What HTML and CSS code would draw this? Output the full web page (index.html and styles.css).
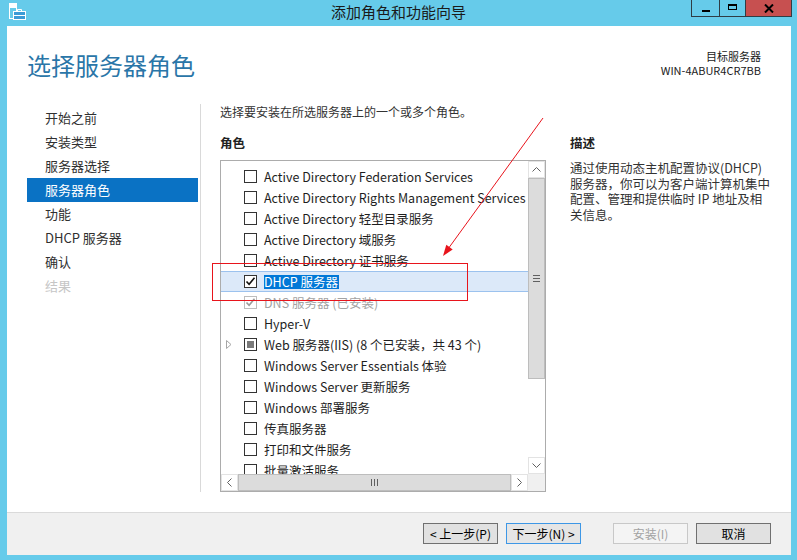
FILE: index.html
```html
<!DOCTYPE html>
<html lang="zh">
<head>
  <meta charset="UTF-8">
  <title>添加角色和功能向导</title>
  <link rel="stylesheet" href="styles.css">
</head>
<body>

  <div class="window">
    <div class="titlebar">
      <svg class="app-icon" width="17" height="17" viewBox="0 0 17 17">
        <rect x="0.5" y="0.5" width="7" height="15" fill="none" stroke="#fff"/>
        <rect x="1" y="1" width="6" height="4" fill="#fff"/>
        <rect x="4.5" y="8.5" width="12" height="8" fill="#3b9bd6" stroke="#fff"/>
        <path d="M8.5 8.5v-2h4v2" stroke="#fff" fill="none"/>
        <path d="M4.5 12.5h12" stroke="#fff"/>
      </svg>
      <div class="title">添加角色和功能向导</div>
      <div class="controls">
        <div class="ctl min"><span class="min-bar"></span></div>
        <div class="ctl max"><span class="max-box"></span></div>
        <div class="ctl close">
          <svg width="10" height="9" viewBox="0 0 10 9"><path d="M1 0.5l8 8M9 0.5l-8 8" stroke="#000" stroke-width="2"/></svg>
        </div>
      </div>
    </div>

    <div class="client">
      <div class="page-head">
        <h1>选择服务器角色</h1>
        <div class="target">
          <div>目标服务器</div>
          <div>WIN-4ABUR4CR7BB</div>
        </div>
      </div>

      <div class="main">
        <ul class="nav">
          <li>开始之前</li>
          <li>安装类型</li>
          <li>服务器选择</li>
          <li class="active">服务器角色</li>
          <li>功能</li>
          <li>DHCP 服务器</li>
          <li>确认</li>
          <li class="disabled">结果</li>
        </ul>

        <div class="content">
          <p class="intro">选择要安装在所选服务器上的一个或多个角色。</p>
          <div class="columns">
            <div class="roles">
              <div class="col-title">角色</div>
              <div class="listbox">
                <div class="list-area">
                  <div class="rows">
                    <div class="row"><span class="exp"></span><span class="cb"></span>Active Directory Federation Services</div>
                    <div class="row"><span class="exp"></span><span class="cb"></span>Active Directory Rights Management Services</div>
                    <div class="row"><span class="exp"></span><span class="cb"></span>Active Directory 轻型目录服务</div>
                    <div class="row"><span class="exp"></span><span class="cb"></span>Active Directory 域服务</div>
                    <div class="row"><span class="exp"></span><span class="cb"></span>Active Directory 证书服务</div>
                    <div class="row selected"><span class="exp"></span><span class="cb"><svg width="11" height="11" viewBox="0 0 11 11"><path d="M1.5 5.5l2.6 2.8 5.4-6.6" stroke="#111" stroke-width="1.6" fill="none"/></svg></span><span class="sel-text">DHCP 服务器</span></div>
                    <div class="row installed"><span class="exp"></span><span class="cb"><svg width="11" height="11" viewBox="0 0 11 11"><path d="M1.5 5.5l2.6 2.8 5.4-6.6" stroke="#9a9a9a" stroke-width="1.6" fill="none"/></svg></span>DNS 服务器 (已安装)</div>
                    <div class="row"><span class="exp"></span><span class="cb"></span>Hyper-V</div>
                    <div class="row"><span class="exp"><svg width="6" height="9" viewBox="0 0 6 9"><path d="M0.5 0.5l4.5 4-4.5 4z" fill="none" stroke="#a6a6a6"/></svg></span><span class="cb partial"><span class="fill"></span></span>Web 服务器(IIS) (8 个已安装，共 43 个)</div>
                    <div class="row"><span class="exp"></span><span class="cb"></span>Windows Server Essentials 体验</div>
                    <div class="row"><span class="exp"></span><span class="cb"></span>Windows Server 更新服务</div>
                    <div class="row"><span class="exp"></span><span class="cb"></span>Windows 部署服务</div>
                    <div class="row"><span class="exp"></span><span class="cb"></span>传真服务器</div>
                    <div class="row"><span class="exp"></span><span class="cb"></span>打印和文件服务</div>
                    <div class="row"><span class="exp"></span><span class="cb"></span>批量激活服务</div>
                  </div>
                  <div class="vscroll">
                    <div class="sb-btn"><svg width="9" height="5" viewBox="0 0 9 5"><path d="M0.5 4.5l4-4 4 4" stroke="#606060" fill="none"/></svg></div>
                    <div class="v-thumb"><span class="grip-h"></span></div>
                    <div class="v-track"></div>
                    <div class="sb-btn"><svg width="9" height="5" viewBox="0 0 9 5"><path d="M0.5 0.5l4 4 4-4" stroke="#606060" fill="none"/></svg></div>
                  </div>
                </div>
                <div class="hscroll-row">
                  <div class="sb-btn"><svg width="5" height="9" viewBox="0 0 5 9"><path d="M4.5 0.5l-4 4 4 4" stroke="#606060" fill="none"/></svg></div>
                  <div class="h-thumb"><span class="grip-v"></span></div>
                  <div class="sb-btn"><svg width="5" height="9" viewBox="0 0 5 9"><path d="M0.5 0.5l4 4-4 4" stroke="#606060" fill="none"/></svg></div>
                  <div class="corner"></div>
                </div>
              </div>
            </div>

            <div class="desc">
              <div class="col-title">描述</div>
              <p class="desc-text">通过使用动态主机配置协议(DHCP)<br>服务器，你可以为客户端计算机集中<br>配置、管理和提供临时 IP 地址及相<br>关信息。</p>
            </div>
          </div>
        </div>
      </div>

      <div class="footer">
        <button class="btn">&lt; 上一步(P)</button>
        <button class="btn default">下一步(N) &gt;</button>
        <button class="btn disabled">安装(I)</button>
        <button class="btn">取消</button>
      </div>
    </div>
  </div>

  <svg class="annot" width="797" height="560" viewBox="0 0 797 560">
    <rect x="212.5" y="263.5" width="255" height="37" fill="none" stroke="#e8141c"/>
    <line x1="543" y1="118" x2="448" y2="249" stroke="#e8141c"/>
    <polygon points="443,256 452.7,249.5 446.3,244.8" fill="#e8141c"/>
  </svg>

</body>
</html>
```

FILE: styles.css
```css
body {
  margin: 0;
  background: #66cbea;
  font-family: "Noto Sans CJK SC", "Noto Sans", sans-serif;
  color: #1e1e1e;
}

.window {
  width: 797px;
  height: 560px;
  display: flex;
  flex-direction: column;
}

/* title bar */
.titlebar {
  height: 26px;
  display: grid;
  grid-template-columns: 1fr auto 1fr;
  align-items: start;
}

.app-icon {
  margin: 3px 0 0 9px;
}

.title {
  font-size: 15px;
  line-height: 23px;
  color: #1a1a1a;
}

.controls {
  justify-self: end;
  display: flex;
  margin-right: 5px;
}

.ctl {
  height: 17px;
  box-sizing: border-box;
  border: 1px solid #2f3d45;
  border-top: none;
  display: flex;
  justify-content: center;
  align-items: center;
}

.ctl.min {
  width: 29px;
}

.ctl.max {
  width: 27px;
  margin-left: -1px;
}

.ctl.close {
  width: 47px;
  margin-left: -1px;
  background: #c75050;
}

.min-bar {
  width: 8px;
  height: 2px;
  background: #000;
  margin-top: 6px;
}

.max-box {
  width: 9px;
  height: 6px;
  box-sizing: border-box;
  border: 1px solid #000;
  border-top-width: 2px;
  margin-top: -3px;
}

/* client area */
.client {
  flex: 1;
  margin: 0 6px 5px 7px;
  background: #fff;
  display: flex;
  flex-direction: column;
}

.page-head {
  height: 78px;
  box-sizing: border-box;
  padding: 0 30px 0 20px;
  display: flex;
  justify-content: space-between;
}

.page-head h1 {
  margin: 0;
  padding-top: 24px;
  font-size: 24px;
  line-height: 30px;
  font-weight: normal;
  color: #2a76a8;
}

.target {
  padding-top: 23px;
  font-size: 11px;
  line-height: 14px;
  text-align: right;
  color: #1a1a1a;
}

.main {
  height: 388px;
  display: flex;
}

.nav {
  list-style: none;
  margin: 0;
  width: 194px;
  box-sizing: border-box;
  padding: 2px 2px 0 20px;
  border-right: 1px solid #d9d9d9;
}

.nav li {
  height: 24px;
  line-height: 24px;
  padding-left: 18px;
  font-size: 13px;
  color: #303030;
}

.nav li.active {
  background: #0a72c4;
  color: #fff;
}

.nav li.disabled {
  color: #c6c6c6;
}

.content {
  padding-left: 19px;
}

.intro {
  margin: 0;
  font-size: 12px;
  line-height: 16px;
  color: #333;
}

.columns {
  display: flex;
  gap: 24px;
  margin-top: 15px;
}

.col-title {
  font-size: 12.5px;
  line-height: 16px;
  font-weight: bold;
  color: #222;
}

/* list box */
.listbox {
  margin-top: 9px;
  width: 326px;
  height: 332px;
  box-sizing: border-box;
  border: 1px solid #acacac;
  display: flex;
  flex-direction: column;
}

.list-area {
  flex: 1;
  display: flex;
  min-height: 0;
}

.rows {
  flex: 1;
  overflow: hidden;
  padding-top: 5px;
}

.row {
  height: 21px;
  box-sizing: border-box;
  display: flex;
  align-items: center;
  padding-left: 5px;
  font-size: 12.5px;
  white-space: nowrap;
  color: #1e1e1e;
}

.row.selected {
  background: #dce9f9;
  border-top: 1px solid #9cc2ee;
  border-bottom: 1px solid #9cc2ee;
}

.row.installed {
  color: #a3a3a3;
}

.exp {
  width: 18px;
  display: flex;
  align-items: center;
}

.cb {
  width: 13px;
  height: 13px;
  box-sizing: border-box;
  border: 1px solid #333;
  background: #fff;
  margin-right: 7px;
  flex-shrink: 0;
  display: flex;
  justify-content: center;
  align-items: center;
}

.row.installed .cb {
  border-color: #bdbdbd;
}

.cb .fill {
  width: 7px;
  height: 7px;
  background: #7a7a7a;
}

.sel-text {
  background: #0078d7;
  color: #fff;
  line-height: 14px;
  padding-right: 1px;
}

/* scroll bars */
.vscroll {
  width: 17px;
  display: flex;
  flex-direction: column;
  background: #fff;
}

.sb-btn {
  width: 17px;
  height: 17px;
  box-sizing: border-box;
  border: 1px solid #e3e3e3;
  background: #fff;
  display: flex;
  justify-content: center;
  align-items: center;
  flex-shrink: 0;
}

.v-thumb {
  height: 201px;
  box-sizing: border-box;
  border: 1px solid #bdbdbd;
  background: #dcdcdc;
  display: flex;
  justify-content: center;
  align-items: center;
}

.grip-h {
  width: 7px;
  height: 5px;
  border-top: 1px solid #606060;
  border-bottom: 1px solid #606060;
  background: linear-gradient(#dcdcdc 2px, #606060 2px, #606060 3px, #dcdcdc 3px);
}

.v-track {
  flex: 1;
}

.hscroll-row {
  height: 17px;
  display: flex;
}

.h-thumb {
  flex: 1;
  box-sizing: border-box;
  border: 1px solid #bdbdbd;
  background: #dcdcdc;
  display: flex;
  justify-content: center;
  align-items: center;
}

.grip-v {
  width: 5px;
  height: 7px;
  border-left: 1px solid #606060;
  border-right: 1px solid #606060;
  background: linear-gradient(90deg, #dcdcdc 2px, #606060 2px, #606060 3px, #dcdcdc 3px);
}

.corner {
  width: 17px;
  background: #f0f0f0;
}

/* description */
.desc {
  width: 205px;
}

.desc-text {
  margin: 9px 0 0;
  font-size: 12.5px;
  line-height: 15.6px;
  color: #333;
}

/* footer */
.footer {
  margin-top: auto;
  height: 43px;
  box-sizing: border-box;
  border-top: 1px solid #dadada;
  background: #f0f0f0;
  padding: 10px 20px 0 0;
  display: flex;
  justify-content: flex-end;
  align-items: flex-start;
}

.btn {
  width: 75px;
  height: 21px;
  box-sizing: border-box;
  border: 1px solid #707070;
  background: #e1e1e1;
  font-family: inherit;
  font-size: 12px;
  line-height: 17px;
  padding: 0;
  color: #000;
  margin-left: 8px;
}

.btn.default {
  border-color: #3d97e6;
  background: #e5e5e5;
}

.btn.disabled {
  background: #f4f4f4;
  border-color: #c8c8c8;
  color: #a2a2a2;
  margin-left: 32px;
}

.annot {
  position: absolute;
  left: 0;
  top: 0;
  pointer-events: none;
}
```
